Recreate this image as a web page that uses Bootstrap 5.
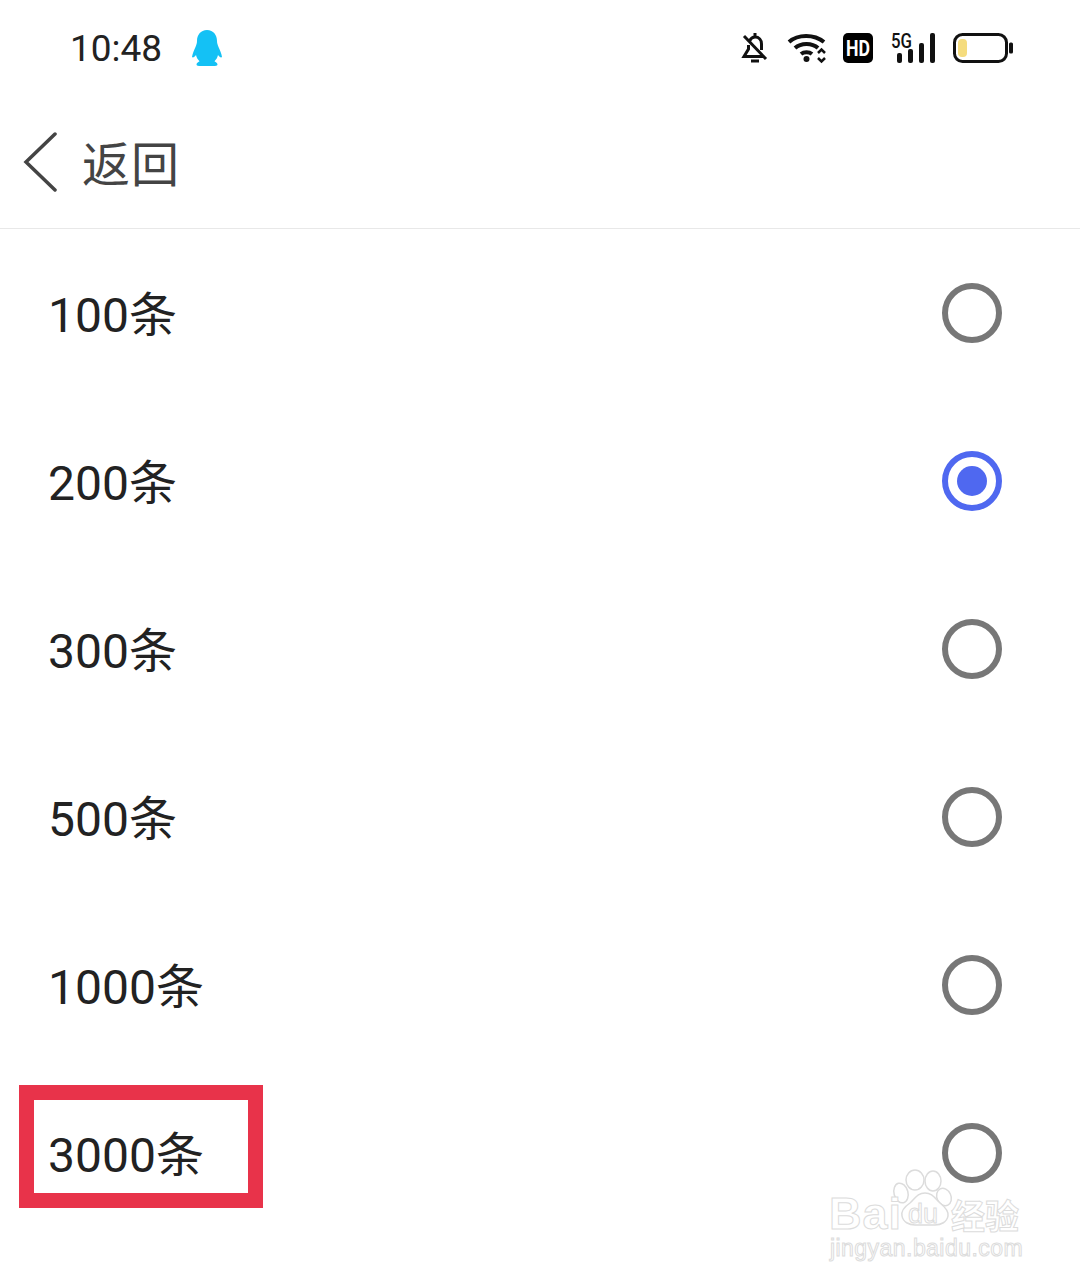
<!DOCTYPE html>
<html lang="zh-CN">
<head>
  <meta charset="UTF-8">
  <meta name="viewport" content="width=device-width, initial-scale=1.0">
  <title>返回</title>
  <link href="https://cdn.jsdelivr.net/npm/bootstrap@5.3.5/dist/css/bootstrap.min.css" rel="stylesheet">
  <style>
    body { background: #fff; font-family: Roboto, "Noto Sans CJK SC", sans-serif; color: #222; }
    .phone { position: relative; width: 1080px; height: 1285px; overflow: hidden; }
    .status-bar { height: 96px; padding-left: 70px; padding-right: 67px; }
    .status-time { font-size: 37px; line-height: 1; color: #222; width: 121px; padding-top: 1px; }
    .status-icons svg { display: block; overflow: visible; }
    .ic-wifi { margin-left: 19px; }
    .ic-hd { margin-left: 15px; }
    .ic-sig { margin-left: 17px; }
    .ic-bat { margin-left: 17px; }
    .back-bar { height: 133px; padding-left: 23px; border-bottom: 1px solid #e8e8e8; }
    .back-label { font-size: 48px; line-height: 1; color: #444; margin-left: 25px; padding-top: 7px; letter-spacing: 1px; }
    .opt-row { position: relative; height: 168px; padding-left: 48px; padding-right: 78px; }
    .opt-text { font-size: 48px; line-height: 1; color: #222; padding-top: 5px; }
    .opt-radio { width: 60px; height: 60px; border: 6px solid #777; border-radius: 50%; }
    .opt-radio.on { border-color: #4f68f0; position: relative; }
    .opt-radio.on::after { content: ""; position: absolute; left: 9px; top: 9px; width: 30px; height: 30px; border-radius: 50%; background: #4f68f0; }
    .red-box { position: absolute; left: 19px; top: 16px; width: 244px; height: 123px; border: 15px solid #e8334a; }
    .wm { position: absolute; left: 826px; top: 1168px; width: 200px; height: 100px; color: #fff; -webkit-text-stroke: 1px #dcdcdc; }
    .wm svg { position: absolute; left: 0; top: 0; }
    .wm-bai { position: absolute; left: 3px; top: 23px; font: 700 45px/1 "Liberation Sans", sans-serif; letter-spacing: 1px; }
    .wm-du { position: absolute; left: 82px; top: 33px; font: 400 27px/1 "Liberation Sans", sans-serif; }
    .wm-cn { position: absolute; left: 125px; top: 30px; font: 700 34px/1 "Noto Sans CJK SC", sans-serif; }
    .wm-url { position: absolute; left: 4px; top: 69px; font: 400 23px/1 "Liberation Sans", sans-serif; letter-spacing: .45px; white-space: nowrap; }
  </style>
</head>
<body>
  <div class="phone">

    <!-- Status bar -->
    <div class="status-bar d-flex align-items-center">
      <div class="status-time">10:48</div>
      <svg width="32" height="38" viewBox="0 0 32 38">
        <path fill="#14c1f5" d="M16 1c-6.500 0-10 5-10 11 0 2-.5 3.500-1.500 6C3 21 1.500 25 1 28c1 1 2.500 0 4-2 .5 2.500 1.700 4.500 3.500 6.200-1.500.7-3 2-3 3.300 0 1 1.500 1.500 5 1.500h11c3.500 0 5-.5 5-1.500 0-1.300-1.500-2.600-3-3.300 1.800-1.700 3-3.700 3.500-6.200 1.500 2 3 3 4 2-.5-3-2-7-3.500-10-1-2.500-1.500-4-1.500-6 0-6-3.500-11-10-11z"/>
      </svg>
      <div class="status-icons ms-auto d-flex align-items-center">
        <!-- muted bell -->
        <svg width="28" height="32" viewBox="-2 0 28 32" fill="none" stroke="#111" stroke-width="3">
          <path d="M14 1v4M8.500 9c1.200-2.500 3-4 5.500-4 4 0 6.500 3 6.500 7v6M7.500 13v4L3 24.500h19"/>
          <path d="M3 4l22 23"/>
          <path d="M10 29h8" stroke-width="3"/>
        </svg>
        <!-- wifi with arrows -->
        <svg class="ic-wifi" width="42" height="32" viewBox="-1 0 42 32" fill="none" stroke="#111">
          <path d="M2 10C11 2 27 2 37 10" stroke-width="4"/>
          <path d="M8 16c6-5.500 17-5.500 23 0" stroke-width="4"/>
          <path d="M14 22c3-2.500 8-2.500 11 0" stroke-width="4"/>
          <circle cx="19.500" cy="27" r="3" fill="#111" stroke="none"/>
          <path d="M31 21l3.500-3.500 3.500 3.500M31 26l3.500 3.500 3.500-3.500" stroke-width="2.500"/>
        </svg>
        <!-- HD -->
        <svg class="ic-hd" width="30" height="30" viewBox="0 0 30 30">
          <rect width="30" height="30" rx="5" fill="#000"/>
          <text x="15" y="23" text-anchor="middle" font-family="Roboto, sans-serif" font-weight="700" font-size="22" fill="#fff" textLength="24" lengthAdjust="spacingAndGlyphs">HD</text>
        </svg>
        <!-- 5G signal -->
        <svg class="ic-sig" width="46" height="32" viewBox="0 0 46 32">
          <text x="1" y="16" font-family="Roboto, sans-serif" font-weight="500" font-size="21" fill="#111" textLength="21" lengthAdjust="spacingAndGlyphs">5G</text>
          <rect x="7" y="21" width="5" height="10" rx="2" fill="#111"/>
          <rect x="18" y="17" width="5" height="14" rx="2" fill="#111"/>
          <rect x="29" y="11" width="5" height="20" rx="2" fill="#111"/>
          <rect x="40" y="1" width="5" height="30" rx="2" fill="#111"/>
        </svg>
        <!-- battery -->
        <svg class="ic-bat" width="60" height="30" viewBox="0 0 60 30">
          <rect x="1.500" y="1.500" width="52" height="27" rx="8" fill="#fff" stroke="#111" stroke-width="3"/>
          <rect x="5" y="6" width="9" height="18" rx="4" fill="#f5dc7e"/>
          <rect x="56" y="9.500" width="4" height="11" rx="1.500" fill="#111"/>
        </svg>
      </div>
    </div>

    <!-- Back bar -->
    <div class="back-bar d-flex align-items-center">
      <svg width="34" height="60" viewBox="0 0 34 60" fill="none" stroke="#444" stroke-width="3.500" stroke-linecap="round">
        <path d="M32 2L3 30l29 28"/>
      </svg>
      <span class="back-label">返回</span>
    </div>

    <!-- Options -->
    <div class="opt-row d-flex align-items-center justify-content-between">
      <span class="opt-text">100条</span><span class="opt-radio"></span>
    </div>
    <div class="opt-row d-flex align-items-center justify-content-between">
      <span class="opt-text">200条</span><span class="opt-radio on"></span>
    </div>
    <div class="opt-row d-flex align-items-center justify-content-between">
      <span class="opt-text">300条</span><span class="opt-radio"></span>
    </div>
    <div class="opt-row d-flex align-items-center justify-content-between">
      <span class="opt-text">500条</span><span class="opt-radio"></span>
    </div>
    <div class="opt-row d-flex align-items-center justify-content-between">
      <span class="opt-text">1000条</span><span class="opt-radio"></span>
    </div>
    <div class="opt-row d-flex align-items-center justify-content-between">
      <span class="opt-text">3000条</span><span class="opt-radio"></span>
      <div class="red-box"></div>
    </div>

    <!-- Watermark -->
    <div class="wm">
      <svg width="200" height="70" viewBox="0 0 200 70" fill="#fff" stroke="#dcdcdc" stroke-width="1.500">
        <ellipse cx="89" cy="12" rx="9" ry="10"/>
        <ellipse cx="107" cy="13" rx="8" ry="10"/>
        <ellipse cx="75" cy="25" rx="7" ry="10" transform="rotate(-15 75 25)"/>
        <ellipse cx="118" cy="29" rx="7" ry="9" transform="rotate(-25 118 29)"/>
        <path d="M99 25c-8 0-10 6-15 10-6 4-9 8-8 13 1 6 7 9 13 9h20c6 0 12-3 13-9 1-5-3-9-8-13-5-4-7-10-15-10z"/>
      </svg>
      <span class="wm-bai">Bai</span>
      <span class="wm-du">du</span>
      <span class="wm-cn">经验</span>
      <span class="wm-url">jingyan.baidu.com</span>
    </div>

  </div>

  <script src="https://cdn.jsdelivr.net/npm/bootstrap@5.3.5/dist/js/bootstrap.bundle.min.js"></script>
</body>
</html>
